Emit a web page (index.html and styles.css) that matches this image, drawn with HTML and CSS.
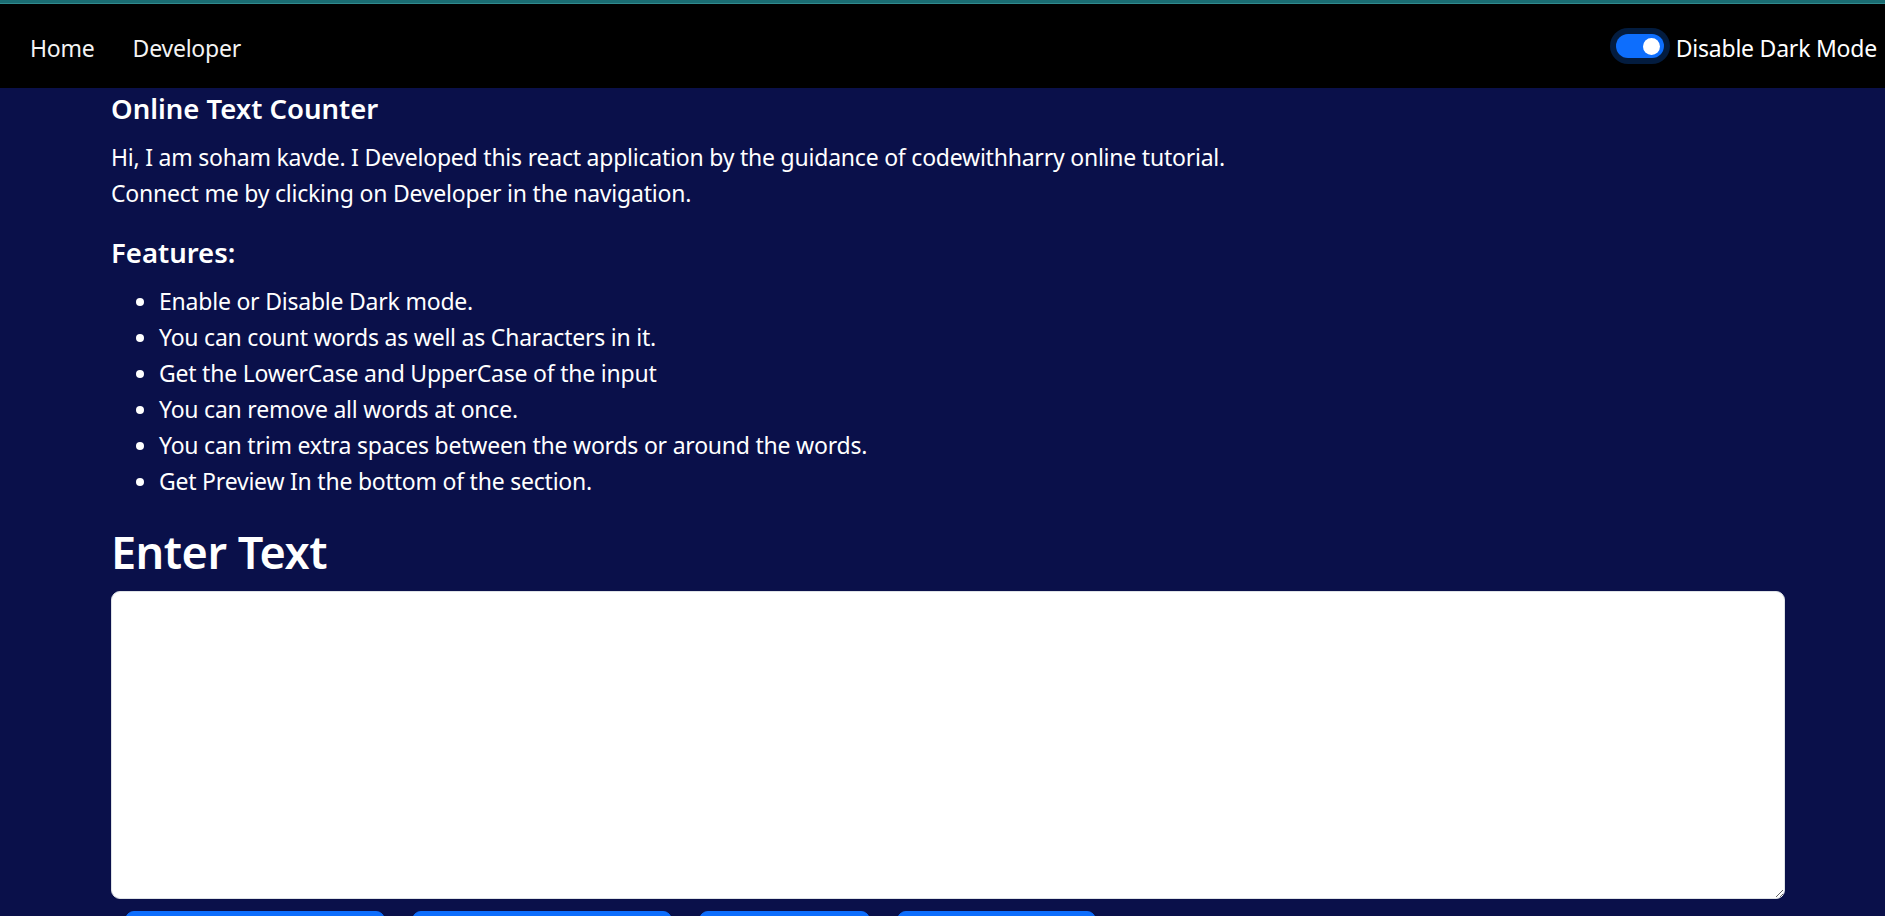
FILE: index.html
```html
<!DOCTYPE html>
<html lang="en">
<head>
<meta charset="utf-8">
<title>TextUtils</title>
<link rel="stylesheet" href="styles.css">
</head>
<body>
<div class="topline"></div>
<nav class="navbar">
  <ul class="nav-links">
    <li><a class="nav-link" href="#">Home</a></li>
    <li><a class="nav-link" href="#">Developer</a></li>
  </ul>
  <label class="switch">
    <span class="switch-track"><span class="switch-knob"></span></span>
    <span class="switch-label">Disable Dark Mode</span>
  </label>
</nav>
<main class="container">
  <h5 class="title">Online Text Counter</h5>
  <p class="intro">Hi, I am soham kavde. I Developed this react application by the guidance of codewithharry online tutorial.<br>Connect me by clicking on Developer in the navigation.</p>
  <h5 class="title">Features:</h5>
  <ul class="features">
    <li>Enable or Disable Dark mode.</li>
    <li>You can count words as well as Characters in it.</li>
    <li>Get the LowerCase and UpperCase of the input</li>
    <li>You can remove all words at once.</li>
    <li>You can trim extra spaces between the words or around the words.</li>
    <li>Get Preview In the bottom of the section.</li>
  </ul>
  <h1 class="enter">Enter Text</h1>
  <textarea class="textbox"></textarea>
  <div class="actions">
    <button class="btn btn-a">Convert to UpperCase</button>
    <button class="btn btn-b">Convert to LowerCase</button>
    <button class="btn btn-c">Clear Text</button>
    <button class="btn btn-d">Remove Spaces</button>
  </div>
</main>
</body>
</html>
```

FILE: styles.css
```css
* { box-sizing: border-box; }
html, body { margin: 0; padding: 0; }
body {
  background: #0a104a;
  color: #ffffff;
  font-family: "Noto Sans", "Open Sans", sans-serif;
  font-size: 23px;
  letter-spacing: -0.22px;
  line-height: 36px;
  overflow: hidden;
  height: 916px;
}
.topline {
  height: 4px;
  background: #1a6c72;
  border-bottom: 1px solid #2f8a8e;
}
.navbar {
  height: 84px;
  background: #000000;
  display: flex;
  align-items: center;
  padding: 4px 8px 0 18px;
}
.nav-links {
  list-style: none;
  margin: 0;
  padding: 0;
  display: flex;
  gap: 14px;
}
.nav-link {
  display: block;
  padding: 0 12px;
  color: #f4f4f4;
  text-decoration: none;
}
.switch {
  margin-left: auto;
  display: flex;
  align-items: center;
  gap: 12px;
}
.switch-track {
  width: 48px;
  height: 24px;
  border-radius: 12px;
  background: #0d6efd;
  box-shadow: 0 0 0 6px rgba(13, 110, 253, 0.25);
  display: flex;
  align-items: center;
  justify-content: flex-end;
  padding-right: 4px;
  margin-top: -4px;
}
.switch-knob {
  width: 17px;
  height: 17px;
  border-radius: 50%;
  background: #ffffff;
}
.switch-label { color: #ffffff; }
.container {
  padding: 3px 0 0 111px;
  width: 1785px;
}
.title {
  margin: 0 0 12px;
  font-size: 27.5px;
  font-weight: 600;
  letter-spacing: 0;
  line-height: 36px;
}
.intro { margin: 0 0 24px; }
.features {
  margin: 0 0 24px;
  padding-left: 48px;
}
.enter {
  margin: 0 0 11px;
  font-size: 45px;
  font-weight: 600;
  letter-spacing: -0.5px;
  line-height: 57px;
}
.textbox {
  display: block;
  width: 1674px;
  height: 308px;
  border: 1px solid #dee2e6;
  border-radius: 9px;
  background: #ffffff;
  resize: vertical;
  font: inherit;
  margin: 0 0 12px;
}
.actions {
  display: flex;
  padding-left: 14px;
}
.btn {
  height: 56px;
  margin-right: 27px;
  background: #0d6efd;
  border: 1px solid #0d6efd;
  border-radius: 9px;
  color: #ffffff;
  font: inherit;
  flex: none;
}
.btn-a { width: 260px; }
.btn-b { width: 260px; }
.btn-c { width: 171px; }
.btn-d { width: 199px; }
```
